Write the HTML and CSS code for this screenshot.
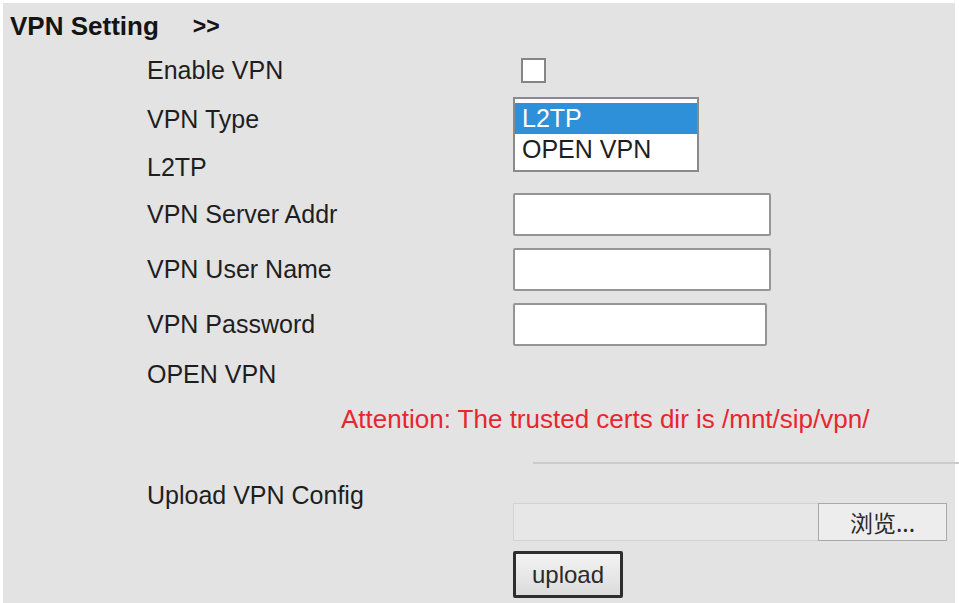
FILE: index.html
```html
<!DOCTYPE html>
<html lang="en">
  <head>
    <meta charset="UTF-8" />
    <meta name="viewport" content="width=device-width, initial-scale=1.0" />
    <title>VPN Setting</title>
    <link rel="stylesheet" href="styles.css">
  </head>
  <body>
    <div class="panel">
      <div class="section-title">VPN Setting<span class="arrow">&gt;&gt;</span></div>

      <div class="vpn-form">
        <div class="label row-enable">Enable VPN</div>
        <div class="control row-enable"><input type="checkbox" class="check" /></div>

        <div class="label row-type">VPN Type</div>
        <div class="control row-type listbox-cell">
          <div class="listbox">
            <div class="option selected">L2TP</div>
            <div class="option">OPEN VPN</div>
          </div>
        </div>

        <div class="label row-l2tp">L2TP</div>

        <div class="label row-server">VPN Server Addr</div>
        <div class="control row-server"><input type="text" class="text-input" /></div>

        <div class="label row-user">VPN User Name</div>
        <div class="control row-user"><input type="text" class="text-input" /></div>

        <div class="label row-pass">VPN Password</div>
        <div class="control row-pass"><input type="password" class="text-input short" /></div>

        <div class="label row-open">OPEN VPN</div>

        <div class="attention row-attention">Attention: The trusted certs dir is /mnt/sip/vpn/</div>

        <div class="control row-line"><div class="divider"></div></div>

        <div class="label row-upload upload-label">Upload VPN Config</div>
        <div class="control row-upload upload-cell">
          <div class="file-field">
            <span class="file-name"></span>
            <button class="file-btn">浏览...</button>
          </div>
          <button class="upload-btn">upload</button>
        </div>
      </div>
    </div>
  </body>
</html>
```

FILE: styles.css
```css
html {
  background-color: #ffffff;
}

body {
  margin: 0;
  font-family: "Liberation Sans", Arial, "Noto Sans CJK SC", sans-serif;
  font-size: 25px;
  color: #1e1e1e;
}

.panel {
  margin: 3px 4px 0 3px;
  padding: 0 0 0 7px;
  min-height: 600px;
  box-sizing: border-box;
  background-color: #e3e3e3;
}

.section-title {
  height: 46px;
  display: flex;
  align-items: center;
  font-size: 26px;
  font-weight: bold;
  color: #141414;
}

.section-title .arrow {
  margin-left: 34px;
  font-size: 23px;
}

.vpn-form {
  margin-left: 137px;
  display: grid;
  grid-template-columns: 366px 1fr;
  grid-template-rows: 43px 54px 42px 53px 57px 53px 46px 46px 40px auto;
}

.label {
  grid-column: 1;
  align-self: center;
  line-height: 1.15;
}

.control {
  grid-column: 2;
  align-self: center;
  display: flex;
}

.row-enable { grid-row: 1; }
.row-type { grid-row: 2; }
.row-l2tp { grid-row: 3; }
.row-server { grid-row: 4; }
.row-user { grid-row: 5; }
.row-pass { grid-row: 6; }
.row-open { grid-row: 7; }
.row-attention { grid-row: 8; }
.row-line { grid-row: 9; }
.row-upload { grid-row: 10; }

.check {
  appearance: none;
  -webkit-appearance: none;
  margin: 0 0 0 8px;
  width: 25px;
  height: 25px;
  box-sizing: border-box;
  border: 2px solid #858585;
  background-color: #ffffff;
}

.listbox-cell {
  grid-row: 2 / span 2;
  align-self: start;
  margin-top: 5px;
}

.listbox {
  width: 186px;
  height: 75px;
  box-sizing: border-box;
  border: 2px solid #8a8a8a;
  background-color: #ffffff;
  padding-top: 4px;
}

.option {
  height: 31px;
  line-height: 31px;
  padding-left: 7px;
  color: #1e1e1e;
}

.option.selected {
  background-color: #2e90d8;
  color: #ffffff;
}

.text-input {
  width: 258px;
  height: 43px;
  margin: 0;
  box-sizing: border-box;
  border: 2px solid #959595;
  border-radius: 2px;
  background-color: #ffffff;
  font: inherit;
}

.text-input.short {
  width: 254px;
}

.attention {
  grid-column: 1 / span 2;
  align-self: center;
  padding-left: 194px;
  font-size: 26px;
  color: #e8262f;
  line-height: 1.15;
}

.divider {
  margin-left: 20px;
  margin-right: -4px;
  width: 100%;
  height: 2px;
  background-color: #cbcbcb;
}

.upload-label {
  align-self: start;
  line-height: 24px;
}

.upload-cell {
  align-self: start;
  flex-direction: column;
  align-items: flex-start;
  padding-top: 20px;
}

.file-field {
  width: 434px;
  height: 38px;
  display: flex;
  box-sizing: border-box;
  border: 1px solid #d2d2d2;
  background-color: #e7e7e7;
}

.file-name {
  flex: 1;
}

.file-btn {
  width: 129px;
  margin: -1px -1px -1px 0;
  border: 1px solid #a9a9a9;
  background-color: #ededed;
  font-family: "Noto Sans CJK SC", sans-serif;
  font-size: 23px;
  color: #2a2a2a;
  padding: 0;
}

.upload-btn {
  margin-top: 10px;
  width: 110px;
  height: 47px;
  box-sizing: border-box;
  border: 3px solid #2e2e2e;
  border-radius: 2px;
  background: linear-gradient(#f3f3f3, #dcdcdc);
  font-family: "Liberation Sans", Arial, sans-serif;
  font-size: 24px;
  color: #2a2a2a;
  padding: 0;
}
```
